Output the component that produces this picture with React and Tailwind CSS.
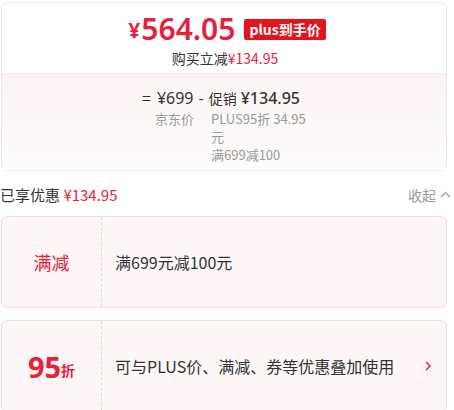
import React from "react";

const font = { fontFamily: '"Microsoft YaHei","Noto Sans CJK SC","Noto Sans",sans-serif' };

export default function App() {
  return (
    <div className="w-[454px] h-[410px] overflow-hidden bg-white text-[#333]" style={font}>
      <div className="w-[448px] pt-[2px]">
        {/* top card */}
        <div className="ml-px mr-px rounded-[6px] border border-[#ece8e9] overflow-hidden">
          <div className="h-[70px] flex flex-col items-center pt-[8px]">
            <div className="flex items-center h-[36px] ml-[6px]">
              <span className="text-[#e6213c] font-bold text-[21px] leading-none mt-[3px] mr-[1px] font-['Noto_Sans']">¥</span>
              <span className="text-[#e6213c] font-semibold text-[30px] leading-none font-['Noto_Sans']">564.05</span>
              <span className="ml-[9px] h-[21px] px-[5px] rounded-[2px] bg-[#e5131d] text-white text-[14px] font-bold leading-[21px] flex items-center">plus到手价</span>
            </div>
            <div className="text-[14px] leading-[20px] ml-[2px] mt-[1px]">
              <span className="text-[#333]">购买立减</span>
              <span className="text-[#e6213c]">¥134.95</span>
            </div>
          </div>
          <div className="h-[97px] bg-gradient-to-b from-[#fdf3f4] to-[#fefcfc] border-t border-[#fbeeee] pt-[12px] pl-[140px]">
            <div className="flex items-baseline text-[#333] leading-[22px]">
              <span className="text-[16px] mr-[6px]">=</span>
              <span className="text-[16px] font-['Noto_Sans']">¥699</span>
              <span className="text-[15px] mx-[5px]">-</span>
              <span className="text-[14px] mr-[4px]">促销</span>
              <span className="text-[16px] font-medium font-['Noto_Sans']">¥134.95</span>
            </div>
            <div className="flex mt-[1px] text-[13px] text-[#999] leading-[18px]">
              <div className="w-[56px] pl-[13px]">京东价</div>
              <div className="ml-[13px]">
                <div className="whitespace-nowrap">PLUS95折 34.95</div>
                <div>元</div>
                <div>满699减100</div>
              </div>
            </div>
          </div>
        </div>

        {/* summary row */}
        <div className="flex items-center justify-between h-[20px] mt-[14px] leading-[20px]">
          <div className="text-[15px]">
            <span className="text-[#333]">已享优惠 </span>
            <span className="text-[#e6213c]">¥134.95</span>
          </div>
          <div className="flex items-center text-[#999] text-[14px] mr-[-4px]">
            <span>收起</span>
            <svg width="13" height="12" viewBox="0 0 13 12" className="ml-[3px]">
              <path d="M2 8 L6.5 3.5 L11 8" fill="none" stroke="#999" strokeWidth="1.1" />
            </svg>
          </div>
        </div>

        {/* card 1 */}
        <div className="ml-px mr-px mt-[11px] h-[92px] rounded-[6px] border border-[#f5dde1] bg-[#fdf5f6] flex items-center">
          <div className="w-[100px] h-full flex items-center justify-center border-r border-dashed border-[#ecd3d7] text-[#e6213c] text-[18px]">
            满减
          </div>
          <div className="pl-[13px] text-[16px] text-[#333]">满699元减100元</div>
        </div>

        {/* card 2 */}
        <div className="ml-px mr-px mt-[12px] h-[92px] rounded-[6px] border border-[#f5dde1] bg-[#fdf5f6] flex items-center">
          <div className="w-[100px] h-full flex items-center justify-center border-r border-dashed border-[#ecd3d7] text-[#e6213c]">
            <span className="text-[29px] font-bold font-['Noto_Sans'] leading-none">95</span>
            <span className="text-[14px] font-bold mt-[8px]">折</span>
          </div>
          <div className="pl-[13px] text-[16px] text-[#333] flex-1">可与PLUS价、满减、券等优惠叠加使用</div>
          <svg width="10" height="12" viewBox="0 0 10 12" className="mr-[13px]">
            <path d="M3 2 L7 6 L3 10" fill="none" stroke="#e6213c" strokeWidth="1.5" />
          </svg>
        </div>
      </div>
    </div>
  );
}
